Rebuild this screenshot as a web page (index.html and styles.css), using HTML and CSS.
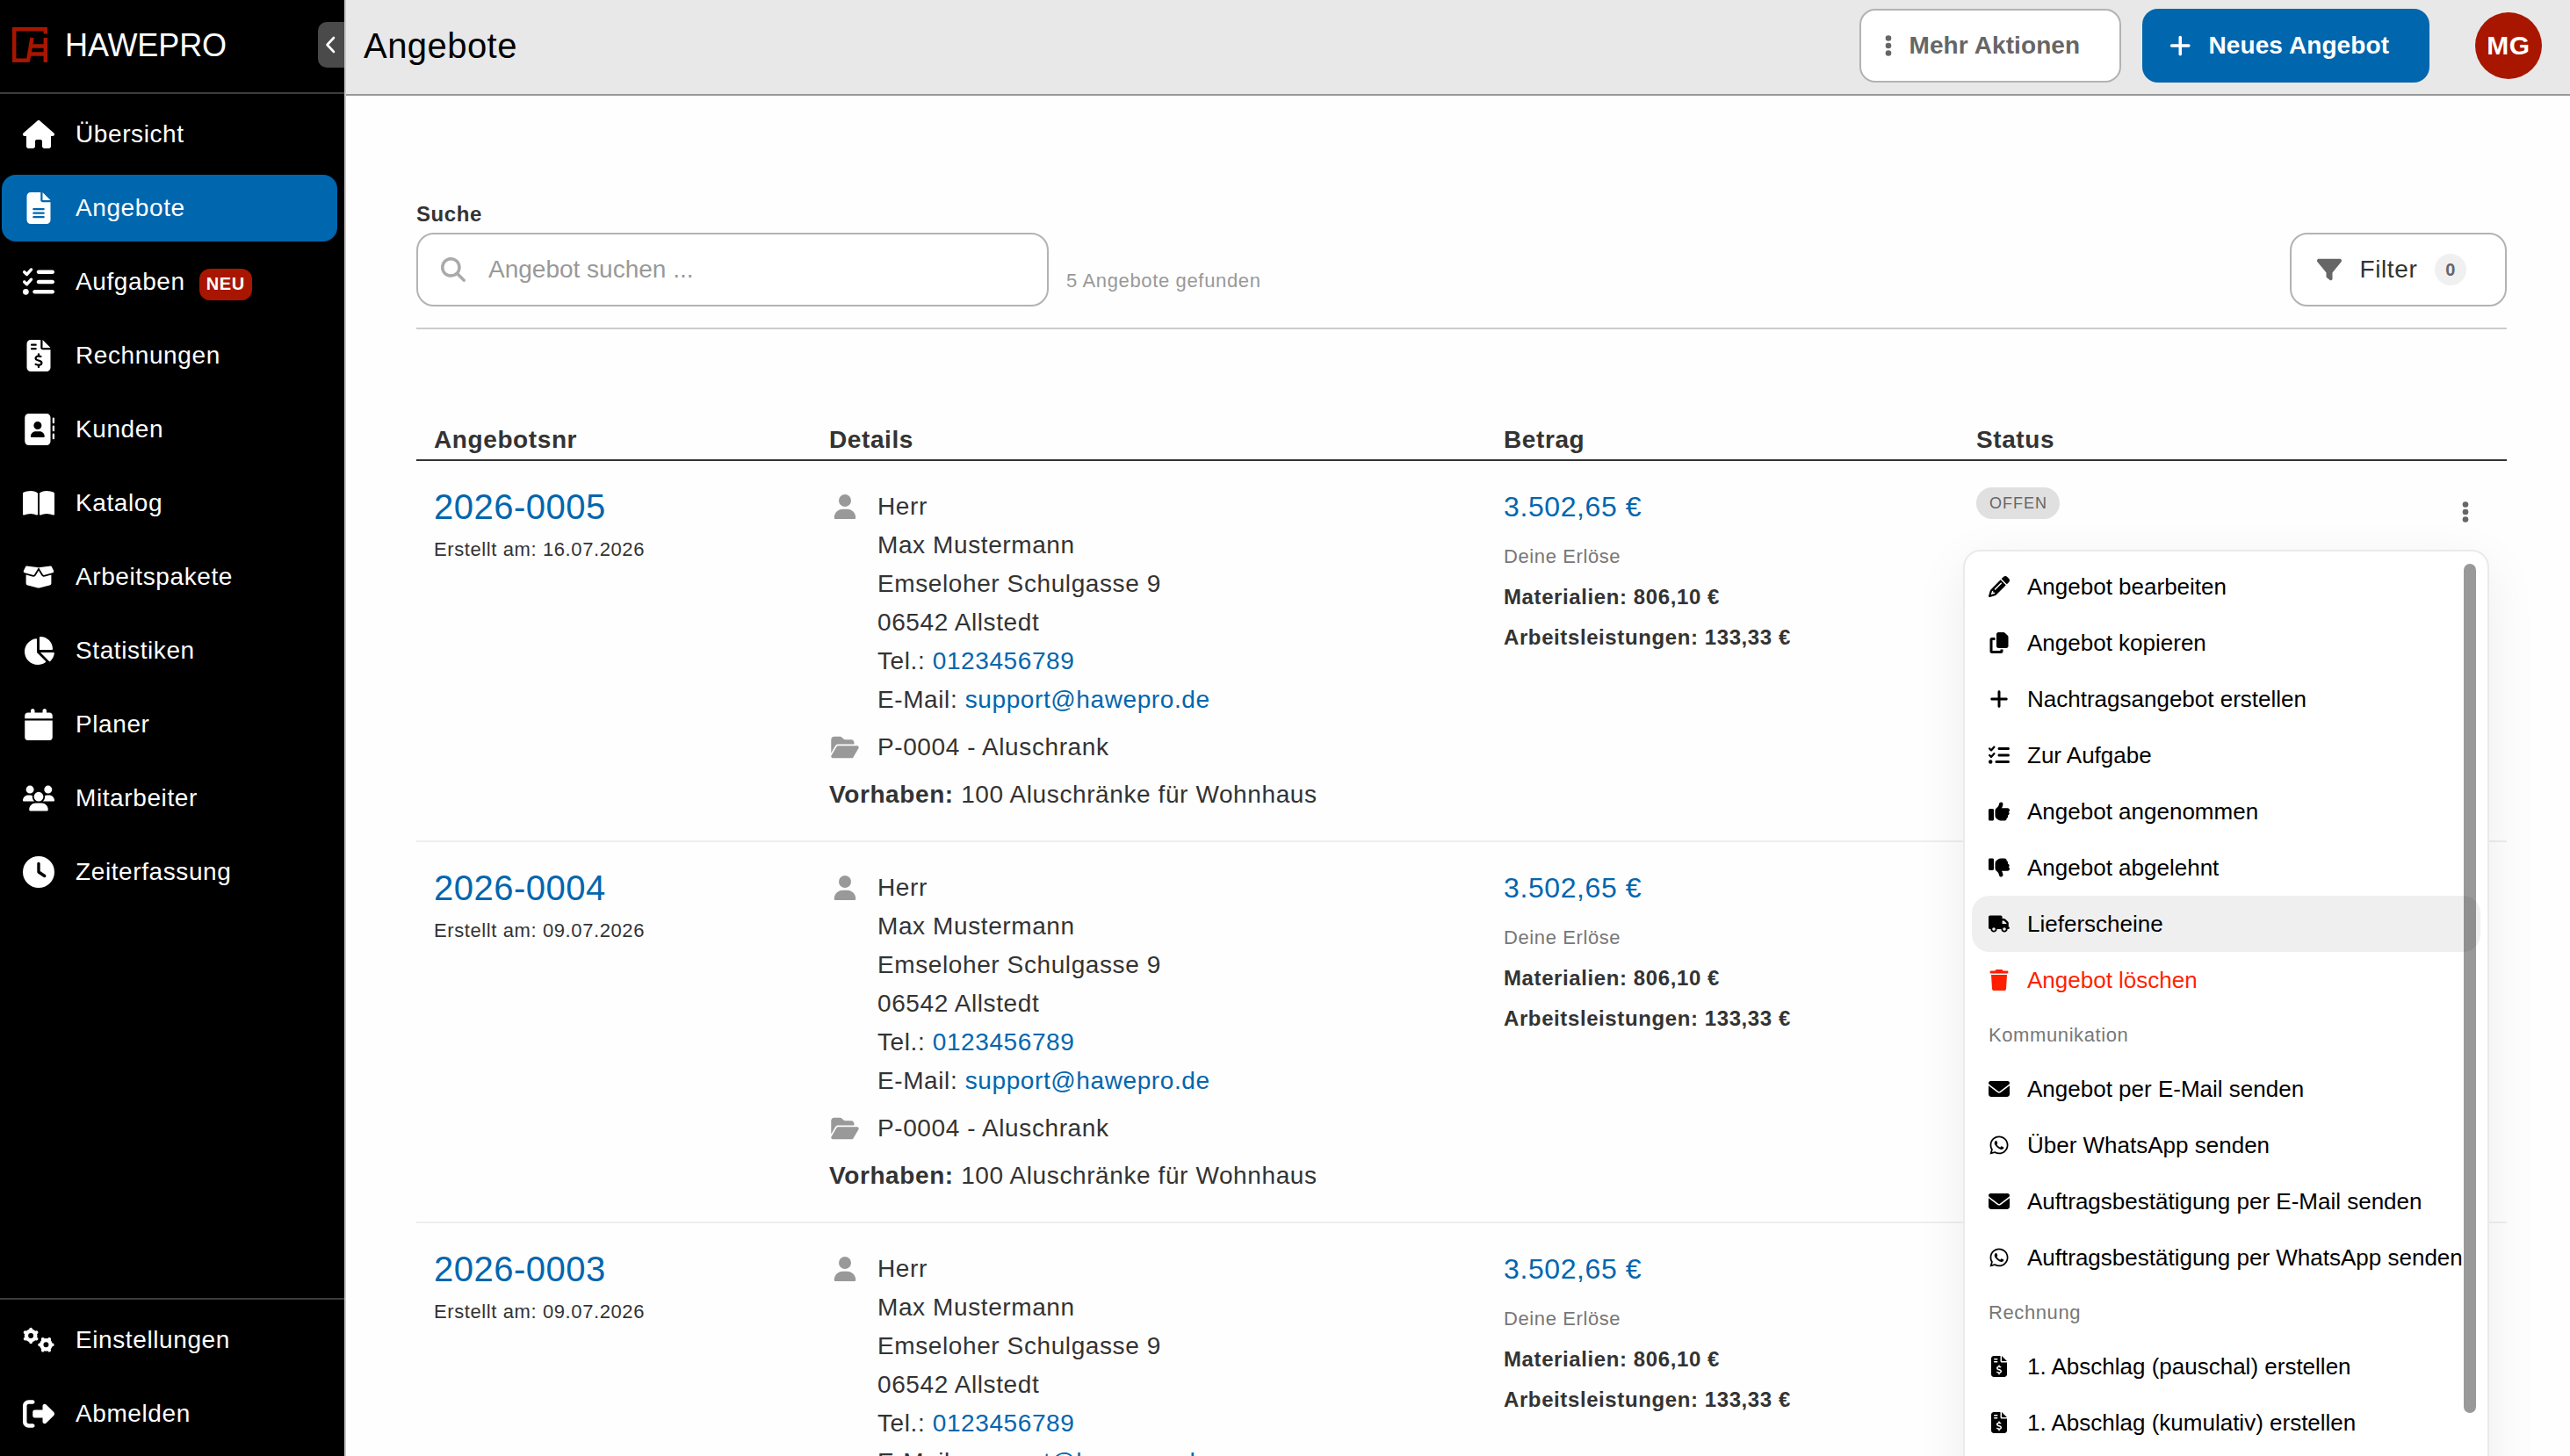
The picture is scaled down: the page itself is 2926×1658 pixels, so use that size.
FILE: index.html
```html
<!DOCTYPE html>
<html lang="de">
<head>
<meta charset="utf-8">
<title>Angebote</title>
<link rel="stylesheet" href="styles.css">
</head>
<body>
<svg class="sprite" aria-hidden="true">
  <symbol id="house" viewBox="0 0 576 512"><path d="M575.8 255.5c0 18-15 32.1-32 32.1h-32l.7 160.2c0 2.7-.2 5.4-.5 8.1V472c0 22.1-17.9 40-40 40H456c-1.1 0-2.2 0-3.3-.1c-1.4 .1-2.8 .1-4.2 .1H416 392c-22.1 0-40-17.9-40-40V448 384c0-17.7-14.3-32-32-32H256c-17.7 0-32 14.3-32 32v64 24c0 22.1-17.9 40-40 40H160 128.1c-1.5 0-3-.1-4.5-.2c-1.2 .1-2.4 .2-3.6 .2H104c-22.1 0-40-17.9-40-40V360c0-.9 0-1.9 .1-2.8V287.6H32c-18 0-32-14-32-32.1c0-9 3-17 10-24L266.4 8c7-7 15-8 22-8s15 2 21 7L564.8 231.5c8 7 12 15 11 24z"/></symbol>
  <symbol id="file-lines" viewBox="0 0 384 512"><path fill-rule="evenodd" d="M64 0C28.7 0 0 28.7 0 64V448c0 35.3 28.7 64 64 64H320c35.3 0 64-28.7 64-64V160H256c-17.7 0-32-14.3-32-32V0H64zM256 0V128H384L256 0zM112 256H272c8.8 0 16 7.2 16 16s-7.2 16-16 16H112c-8.8 0-16-7.2-16-16s7.2-16 16-16zm0 64H272c8.8 0 16 7.2 16 16s-7.2 16-16 16H112c-8.8 0-16-7.2-16-16s7.2-16 16-16zm0 64H272c8.8 0 16 7.2 16 16s-7.2 16-16 16H112c-8.8 0-16-7.2-16-16s7.2-16 16-16z"/></symbol>
  <symbol id="list-check" viewBox="0 0 512 512"><path d="M152.1 38.2c9.9 8.9 10.7 24 1.8 33.9l-72 80c-4.4 4.9-10.6 7.8-17.2 7.9s-12.9-2.4-17.6-7L7 113C-2.3 103.6-2.3 88.4 7 79s24.6-9.4 33.9 0l22.1 22.1 55.1-61.2c8.9-9.9 24-10.7 33.9-1.8zm0 160c9.9 8.9 10.7 24 1.8 33.9l-72 80c-4.4 4.9-10.6 7.8-17.2 7.9s-12.9-2.4-17.6-7L7 273c-9.4-9.4-9.4-24.6 0-33.9s24.6-9.4 33.9 0l22.1 22.1 55.1-61.2c8.9-9.9 24-10.7 33.9-1.8zM224 96c0-17.7 14.3-32 32-32H480c17.7 0 32 14.3 32 32s-14.3 32-32 32H256c-17.7 0-32-14.3-32-32zm0 160c0-17.7 14.3-32 32-32H480c17.7 0 32 14.3 32 32s-14.3 32-32 32H256c-17.7 0-32-14.3-32-32zM160 416c0-17.7 14.3-32 32-32H480c17.7 0 32 14.3 32 32s-14.3 32-32 32H192c-17.7 0-32-14.3-32-32zM48 368a48 48 0 1 1 0 96 48 48 0 1 1 0-96z"/></symbol>
  <symbol id="invoice" viewBox="0 0 384 512"><path fill-rule="evenodd" d="M64 0C28.7 0 0 28.7 0 64V448c0 35.3 28.7 64 64 64H320c35.3 0 64-28.7 64-64V160H256c-17.7 0-32-14.3-32-32V0H64zM256 0V128H384L256 0zM64 80c0-8.8 7.2-16 16-16h64c8.8 0 16 7.2 16 16s-7.2 16-16 16H80c-8.8 0-16-7.2-16-16zm0 64c0-8.8 7.2-16 16-16h64c8.8 0 16 7.2 16 16s-7.2 16-16 16H80c-8.8 0-16-7.2-16-16zm128 72c8.8 0 16 7.2 16 16v17.3c8.5 1.2 16.7 3.1 24.1 5.1c8.5 2.3 13.6 11 11.3 19.6s-11 13.6-19.6 11.3c-11.1-3-22-5.2-32.1-5.3c-8.4-.1-17.4 1.8-23.6 5.5c-5.7 3.4-8.1 7.3-8.1 12.8c0 3.7 1.3 6.5 7.3 10.1c6.9 4.1 16.6 7.1 29.2 10.9l.5 .1c11.3 3.4 25.3 7.6 36.3 14.6c12.1 7.6 22.4 19.7 22.7 38.2c.3 19.3-9.6 33.3-22.9 41.6c-7.7 4.8-16.4 7.6-25.1 9.1V440c0 8.8-7.2 16-16 16s-16-7.2-16-16V422.2c-11.2-2.1-21.7-5.7-30.9-8.9c-2.1-.7-4.2-1.4-6.2-2.1c-8.4-2.8-12.9-11.9-10.1-20.2s11.9-12.9 20.2-10.1c2.5 .8 4.8 1.6 7.1 2.4c13.6 4.6 24.6 8.4 36.3 8.7c9.1 .3 17.9-1.7 23.7-5.3c5.1-3.2 7.9-7.3 7.8-14c-.1-4.6-1.8-7.8-7.7-11.6c-6.8-4.3-16.5-7.4-29-11.2l-1.6-.5c-11-3.3-24.3-7.3-34.8-13.7c-12-7.2-22.6-18.9-22.7-37.3c-.1-19.4 10.8-32.8 23.8-40.5c7.5-4.4 15.8-7.2 24.1-8.7V232c0-8.8 7.2-16 16-16z"/></symbol>
  <symbol id="address-book" viewBox="0 0 512 512"><path fill-rule="evenodd" d="M96 0C60.7 0 32 28.7 32 64V448c0 35.3 28.7 64 64 64H384c35.3 0 64-28.7 64-64V64c0-35.3-28.7-64-64-64H96zM208 288h64c44.2 0 80 35.8 80 80c0 8.8-7.2 16-16 16H144c-8.8 0-16-7.2-16-16c0-44.2 35.8-80 80-80zm-32-96a64 64 0 1 1 128 0 64 64 0 1 1 -128 0zM512 80c0-8.8-7.2-16-16-16s-16 7.2-16 16v64c0 8.8 7.2 16 16 16s16-7.2 16-16V80zM496 192c-8.8 0-16 7.2-16 16v64c0 8.8 7.2 16 16 16s16-7.2 16-16V208c0-8.8-7.2-16-16-16zm16 144c0-8.8-7.2-16-16-16s-16 7.2-16 16v64c0 8.8 7.2 16 16 16s16-7.2 16-16V336z"/></symbol>
  <symbol id="book-open" viewBox="0 0 576 512"><path d="M249.6 471.5c10.8 3.8 22.4-4.1 22.4-15.5V78.6c0-4.2-1.6-8.4-5-11C247.4 52 202.4 32 144 32C93.5 32 46.3 45.3 18.1 56.1C6.8 60.5 0 71.7 0 83.8V454.1c0 11.9 12.8 20.2 24.1 16.5C55.6 460.1 105.5 448 144 448c33.9 0 79 14 105.6 23.5zm76.8 0C353 462 398.1 448 432 448c38.5 0 88.4 12.1 119.9 22.6c11.3 3.8 24.1-4.6 24.1-16.5V83.8c0-12.1-6.8-23.3-18.1-27.6C529.7 45.3 482.5 32 432 32c-58.4 0-103.4 20-123 35.6c-3.3 2.6-5 6.8-5 11V456c0 11.4 11.7 19.3 22.4 15.5z"/></symbol>
  <symbol id="box-open" viewBox="0 0 640 512"><path d="M58.9 42.1c3-6.1 9.6-9.6 16.3-8.7L320 64 564.8 33.4c6.7-.8 13.3 2.7 16.3 8.7l41.7 83.4c9 17.9-.6 39.6-19.8 45.1L439.6 217.3c-13.9 4-28.8-1.9-36.2-14.3L320 64 236.6 203c-7.4 12.4-22.3 18.3-36.2 14.3L37.1 170.6c-19.3-5.5-28.8-27.2-19.8-45.1L58.9 42.1zM321.1 128l54.9 91.4c14.9 24.8 44.6 36.6 72.5 28.6L576 211.6v167c0 22-15 41.2-36.4 46.6l-204.1 51c-10.2 2.6-20.9 2.6-31 0l-204.1-51C79 419.7 64 400.5 64 378.5v-167L191.6 248c27.8 8 57.6-3.8 72.5-28.6L318.9 128h2.2z"/></symbol>
  <symbol id="chart-pie" viewBox="0 0 576 512"><path d="M304 240V16.6c0-9 7-16.6 16-16.6C443.7 0 544 100.3 544 224c0 9-7.6 16-16.6 16H304zM32 272C32 150.7 122.1 50.3 239 34.3c9.2-1.3 17 6.1 17 15.4V288L412.5 444.5c6.7 6.7 6.2 17.7-1.5 23.1C371.8 495.6 323.8 512 272 512C139.5 512 32 404.6 32 272zm526.4 16c9.3 0 16.6 7.8 15.4 17c-7.7 55.9-34.6 105.6-73.9 142.3c-6 5.6-15.4 5.2-21.2-.7L320 288H558.4z"/></symbol>
  <symbol id="calendar" viewBox="0 0 448 512"><path d="M96 32V64H48C21.5 64 0 85.5 0 112v48H448V112c0-26.5-21.5-48-48-48H352V32c0-17.7-14.3-32-32-32s-32 14.3-32 32V64H160V32c0-17.7-14.3-32-32-32S96 14.3 96 32zM448 192H0V464c0 26.5 21.5 48 48 48H400c26.5 0 48-21.5 48-48V192z"/></symbol>
  <symbol id="users" viewBox="0 0 640 512"><path d="M144 0a80 80 0 1 1 0 160A80 80 0 1 1 144 0zM512 0a80 80 0 1 1 0 160A80 80 0 1 1 512 0zM0 298.7C0 239.8 47.8 192 106.7 192h42.7c15.9 0 31 3.5 44.6 9.7c-1.3 7.2-1.9 14.7-1.9 22.3c0 38.2 16.8 72.5 43.3 96c-.2 0-.4 0-.7 0H21.3C9.6 320 0 310.4 0 298.7zM405.3 320c-.2 0-.4 0-.7 0c26.6-23.5 43.3-57.8 43.3-96c0-7.6-.7-15-1.9-22.3c13.6-6.3 28.7-9.7 44.6-9.7h42.7C592.2 192 640 239.8 640 298.7c0 11.8-9.6 21.3-21.3 21.3H405.3zM224 224a96 96 0 1 1 192 0 96 96 0 1 1 -192 0zM128 485.3C128 411.7 187.7 352 261.3 352H378.7C452.3 352 512 411.7 512 485.3c0 14.7-11.9 26.7-26.7 26.7H154.7c-14.7 0-26.7-11.9-26.7-26.7z"/></symbol>
  <symbol id="clock" viewBox="0 0 512 512"><path fill-rule="evenodd" d="M256 0a256 256 0 1 1 0 512A256 256 0 1 1 256 0zM232 120V256c0 8 4 15.5 10.7 20l96 64c11 7.4 25.9 4.4 33.3-6.7s4.4-25.9-6.7-33.3L280 243.2V120c0-13.3-10.7-24-24-24s-24 10.7-24 24z"/></symbol>
  <symbol id="gears" viewBox="0 0 640 512">
    <g fill="none" stroke="currentColor" stroke-linecap="round">
      <circle cx="162" cy="166" r="92" stroke-width="78"/>
      <path stroke-width="68" d="M162 66V36M162 266V296M75 116L49 101M249 116L275 101M75 216L49 231M249 216L275 231"/>
      <circle cx="470" cy="350" r="92" stroke-width="78"/>
      <path stroke-width="68" d="M370 350H340M570 350H600M420 263L405 237M520 263L535 237M420 437L405 463M520 437L535 463"/>
    </g>
  </symbol>
  <symbol id="logout" viewBox="0 0 512 512"><path d="M377.9 105.9L500.7 228.7c7.2 7.2 11.3 17.1 11.3 27.3s-4.1 20.1-11.3 27.3L377.9 406.1c-6.4 6.4-15 9.9-24 9.9c-18.7 0-33.9-15.2-33.9-33.9l0-62.1-128 0c-17.7 0-32-14.3-32-32l0-64c0-17.7 14.3-32 32-32l128 0 0-62.1c0-18.7 15.2-33.9 33.9-33.9c9 0 17.6 3.6 24 9.9zM160 96L96 96c-17.7 0-32 14.3-32 32l0 256c0 17.7 14.3 32 32 32l64 0c17.7 0 32 14.3 32 32s-14.3 32-32 32l-64 0c-53 0-96-43-96-96L0 128C0 75 43 32 96 32l64 0c17.7 0 32 14.3 32 32s-14.3 32-32 32z"/></symbol>
  <symbol id="search" viewBox="0 0 512 512"><path d="M416 208c0 45.9-14.9 88.3-40 122.7L502.6 457.4c12.5 12.5 12.5 32.8 0 45.3s-32.8 12.5-45.3 0L330.7 376c-34.4 25.2-76.8 40-122.7 40C93.1 416 0 322.9 0 208S93.1 0 208 0S416 93.1 416 208zM208 352a144 144 0 1 0 0-288 144 144 0 1 0 0 288z"/></symbol>
  <symbol id="filter" viewBox="0 0 512 512"><path d="M3.9 54.9C10.5 40.9 24.5 32 40 32H472c15.5 0 29.5 8.9 36.1 22.9s4.6 30.5-5.2 42.5L320 320.9V448c0 12.1-6.8 23.2-17.7 28.6s-23.8 4.3-33.5-3l-64-48c-8.1-6-12.8-15.5-12.8-25.6V320.9L9 97.3C-.7 85.4-2.8 68.8 3.9 54.9z"/></symbol>
  <symbol id="user" viewBox="0 0 448 512"><path d="M224 256A128 128 0 1 0 224 0a128 128 0 1 0 0 256zm-45.7 48C79.8 304 0 383.8 0 482.3C0 498.7 13.3 512 29.7 512H418.3c16.4 0 29.7-13.3 29.7-29.7C448 383.8 368.2 304 269.7 304H178.3z"/></symbol>
  <symbol id="folder" viewBox="0 0 576 512"><path d="M88.7 223.8L0 375.8V96C0 60.7 28.7 32 64 32H181.5c17 0 33.3 6.7 45.3 18.7l26.5 26.5c12 12 28.3 18.7 45.3 18.7H416c35.3 0 64 28.7 64 64v32H144c-22.8 0-43.8 12.1-55.3 31.8zm27.6 16.1C122.1 230 132.6 224 144 224H544c11.5 0 22 6.1 27.7 16.1s5.7 22.2-.1 32.1l-112 192C453.9 474 443.4 480 432 480H32c-11.5 0-22-6.1-27.7-16.1s-5.7-22.2 .1-32.1l112-192z"/></symbol>
  <symbol id="pencil" viewBox="0 0 512 512"><path fill-rule="evenodd" d="M410.3 231l11.3-11.3-33.9-33.9-62.1-62.1L291.7 89.8l-11.3 11.3-22.6 22.6L58.6 322.9c-10.4 10.4-18 23.3-22.2 37.4L1 480.7c-2.5 8.4-.2 17.5 6.1 23.7s15.3 8.5 23.7 6.1l120.3-35.4c14.1-4.2 27-11.8 37.4-22.2L387.7 253.7 410.3 231zM160 399.4l-9.1 22.7c-4 3.1-8.5 5.4-13.3 6.9L59.4 452l23-78.1c1.4-4.9 3.8-9.4 6.9-13.3l22.7-9.1v32c0 8.8 7.2 16 16 16h32zM362.7 18.7L348.3 33.2 325.7 55.8 314.3 67.1l33.9 33.9 62.1 62.1 33.9 33.9 11.3-11.3 22.6-22.6 14.5-14.5c25-25 25-65.5 0-90.5L453.3 18.7c-25-25-65.5-25-90.5 0zm-47.4 168l-144 144c-6.2 6.2-16.4 6.2-22.6 0s-6.2-16.4 0-22.6l144-144c6.2-6.2 16.4-6.2 22.6 0s6.2 16.4 0 22.6z"/></symbol>
  <symbol id="copy" viewBox="0 0 448 512"><path d="M208 0H332.1c12.7 0 24.9 5.1 33.9 14.1l67.9 67.9c9 9 14.1 21.2 14.1 33.9V336c0 26.5-21.5 48-48 48H208c-26.5 0-48-21.5-48-48V48c0-26.5 21.5-48 48-48zM48 128h80v64H64V448H256V416h64v48c0 26.5-21.5 48-48 48H48c-26.5 0-48-21.5-48-48V176c0-26.5 21.5-48 48-48z"/></symbol>
  <symbol id="plus" viewBox="0 0 448 512"><path d="M256 80c0-17.7-14.3-32-32-32s-32 14.3-32 32V224H48c-17.7 0-32 14.3-32 32s14.3 32 32 32H192V432c0 17.7 14.3 32 32 32s32-14.3 32-32V288H400c17.7 0 32-14.3 32-32s-14.3-32-32-32H256V80z"/></symbol>
  <symbol id="thumb" viewBox="0 0 512 512"><path d="M313.4 32.9c26 5.2 42.9 30.5 37.7 56.5l-2.3 11.4c-5.3 26.7-15.1 52.1-28.8 75.2H464c26.5 0 48 21.5 48 48c0 18.5-10.5 34.6-25.9 42.6C497 275.4 504 288.9 504 304c0 23.4-16.8 42.9-38.9 47.1c4.4 7.3 6.9 15.8 6.9 24.9c0 21.3-13.9 39.4-33.1 45.6c.7 3.3 1.1 6.8 1.1 10.4c0 26.5-21.5 48-48 48H294.5c-19 0-37.5-5.6-53.3-16.1l-38.5-25.7C176 420.4 160 390.4 160 358.3V320 272 247.1c0-29.2 13.3-56.7 36-75l7.4-5.9c26.5-21.2 44.6-51 51.2-84.2l2.3-11.4c5.2-26 30.5-42.9 56.5-37.7zM32 192H96c17.7 0 32 14.3 32 32V448c0 17.7-14.3 32-32 32H32c-17.7 0-32-14.3-32-32V224c0-17.7 14.3-32 32-32z"/></symbol>
  <symbol id="truck" viewBox="0 0 640 512"><path fill-rule="evenodd" d="M48 0C21.5 0 0 21.5 0 48V368c0 26.5 21.5 48 48 48H64c0 53 43 96 96 96s96-43 96-96H384c0 53 43 96 96 96s96-43 96-96h32c17.7 0 32-14.3 32-32s-14.3-32-32-32V288 256 237.3c0-17-6.7-33.3-18.7-45.3L512 114.7c-12-12-28.3-18.7-45.3-18.7H416V48c0-26.5-21.5-48-48-48H48zM416 160h50.7L544 237.3V256H416V160zM112 416a48 48 0 1 1 96 0 48 48 0 1 1 -96 0zm368-48a48 48 0 1 1 0 96 48 48 0 1 1 0-96z"/></symbol>
  <symbol id="trash" viewBox="0 0 448 512"><path d="M135.2 17.7L128 32H32C14.3 32 0 46.3 0 64S14.3 96 32 96H416c17.7 0 32-14.3 32-32s-14.3-32-32-32H320l-7.2-14.3C307.4 6.8 296.3 0 284.2 0H163.8c-12.1 0-23.2 6.8-28.6 17.7zM416 128H32L53.2 467c1.6 25.3 22.6 45 47.9 45H346.9c25.3 0 46.3-19.7 47.9-45L416 128z"/></symbol>
  <symbol id="envelope" viewBox="0 0 512 512"><path d="M48 64C21.5 64 0 85.5 0 112c0 15.1 7.1 29.3 19.2 38.4L236.8 313.6c11.4 8.5 27 8.5 38.4 0L492.8 150.4c12.1-9.1 19.2-23.3 19.2-38.4c0-26.5-21.5-48-48-48H48zM0 176V384c0 35.3 28.7 64 64 64H448c35.3 0 64-28.7 64-64V176L294.4 339.2c-22.8 17.1-54 17.1-76.8 0L0 176z"/></symbol>
  <symbol id="whatsapp" viewBox="0 0 448 512"><path d="M380.9 97.1C339 55.1 283.2 32 223.9 32c-122.4 0-222 99.6-222 222 0 39.1 10.2 77.3 29.6 111L0 480l117.7-30.9c32.4 17.7 68.9 27 106.1 27h.1c122.3 0 224.1-99.6 224.1-222 0-59.3-25.2-115-67.1-157zm-157 341.6c-33.2 0-65.7-8.9-94-25.7l-6.7-4-69.8 18.3L72 359.2l-4.4-7c-18.5-29.4-28.2-63.3-28.2-98.2 0-101.7 82.8-184.5 184.6-184.5 49.3 0 95.6 19.2 130.4 54.1 34.8 34.9 56.2 81.2 56.1 130.5 0 101.8-84.9 184.6-186.6 184.6zm101.2-138.2c-5.5-2.8-32.8-16.2-37.9-18-5.1-1.9-8.8-2.8-12.5 2.8-3.7 5.6-14.3 18-17.6 21.8-3.2 3.7-6.5 4.2-12 1.4-32.6-16.3-54-29.1-75.5-66-5.7-9.8 5.7-9.1 16.3-30.3 1.8-3.7.9-6.9-.5-9.7-1.4-2.8-12.5-30.1-17.1-41.2-4.5-10.8-9.1-9.3-12.5-9.5-3.2-.2-6.9-.2-10.6-.2-3.7 0-9.7 1.4-14.8 6.9-5.1 5.6-19.4 19-19.4 46.3 0 27.3 19.9 53.7 22.6 57.4 2.8 3.7 39.1 59.7 94.8 83.8 35.2 15.2 49 16.5 66.6 13.9 10.7-1.6 32.8-13.4 37.4-26.4 4.6-13 4.6-24.1 3.2-26.4-1.3-2.5-5-3.9-10.5-6.6z"/></symbol>
  <symbol id="dots" viewBox="0 0 8 24"><circle cx="4" cy="3.5" r="3.3"/><circle cx="4" cy="12" r="3.3"/><circle cx="4" cy="20.5" r="3.3"/></symbol>
</svg>

<div class="app">
  <aside class="sidebar">
    <header class="brand">
      <svg class="brand-logo" viewBox="0 0 40 40" fill="none" stroke="#a81600" stroke-width="4.4"><path d="M37.8 7.5V2.2H2.2v35.6h15.5"/><path d="M17.8 39.5L22.5 12M37.8 12v28M22 21.5h15M20.5 30.5h16"/></svg>
      <span class="brand-name">HAWEPRO</span>
      <button class="collapse" aria-label="Menü einklappen"><svg viewBox="0 0 12 20" fill="none" stroke="#fff" stroke-width="2.6" stroke-linecap="round" stroke-linejoin="round"><path d="M10 2L2.5 10L10 18"/></svg></button>
    </header>
    <nav class="nav">
      <a class="nav-item"><svg><use href="#house"/></svg>Übersicht</a>
      <a class="nav-item active"><svg><use href="#file-lines"/></svg>Angebote</a>
      <a class="nav-item"><svg><use href="#list-check"/></svg>Aufgaben<span class="new-badge">NEU</span></a>
      <a class="nav-item"><svg><use href="#invoice"/></svg>Rechnungen</a>
      <a class="nav-item"><svg><use href="#address-book"/></svg>Kunden</a>
      <a class="nav-item"><svg><use href="#book-open"/></svg>Katalog</a>
      <a class="nav-item"><svg><use href="#box-open"/></svg>Arbeitspakete</a>
      <a class="nav-item"><svg><use href="#chart-pie"/></svg>Statistiken</a>
      <a class="nav-item"><svg><use href="#calendar"/></svg>Planer</a>
      <a class="nav-item"><svg><use href="#users"/></svg>Mitarbeiter</a>
      <a class="nav-item"><svg><use href="#clock"/></svg>Zeiterfassung</a>
    </nav>
    <nav class="nav nav-bottom">
      <a class="nav-item"><svg><use href="#gears"/></svg>Einstellungen</a>
      <a class="nav-item"><svg><use href="#logout"/></svg>Abmelden</a>
    </nav>
  </aside>

  <main class="main">
    <header class="topbar">
      <h1 class="title">Angebote</h1>
      <button class="btn btn-more"><svg class="dots"><use href="#dots"/></svg>Mehr Aktionen</button>
      <button class="btn btn-primary"><svg><use href="#plus"/></svg>Neues Angebot</button>
      <div class="avatar">MG</div>
    </header>

    <div class="content">
      <section class="search">
        <div class="search-field">
          <label class="search-label">Suche</label>
          <div class="search-box"><svg><use href="#search"/></svg>Angebot suchen ...</div>
        </div>
        <span class="count">5 Angebote gefunden</span>
        <button class="filter"><svg><use href="#filter"/></svg>Filter<span class="filter-count">0</span></button>
      </section>

      <section class="table">
        <div class="row head"><div>Angebotsnr</div><div>Details</div><div>Betrag</div><div>Status</div></div>

        <article class="row">
          <div><a class="number">2026-0005</a><p class="created">Erstellt am: 16.07.2026</p></div>
          <div class="details">
            <div class="with-icon"><svg><use href="#user"/></svg><p>Herr<br>Max Mustermann<br>Emseloher Schulgasse 9<br>06542 Allstedt<br>Tel.: <a>0123456789</a><br>E-Mail: <a>support@hawepro.de</a></p></div>
            <div class="with-icon"><svg><use href="#folder"/></svg><p>P-0004 - Aluschrank</p></div>
            <p><b>Vorhaben:</b> 100 Aluschränke für Wohnhaus</p>
          </div>
          <div class="amount"><a class="sum">3.502,65 €</a><p class="muted">Deine Erlöse</p><p class="part">Materialien: 806,10 €</p><p class="part">Arbeitsleistungen: 133,33 €</p></div>
          <div class="status">
            <span class="pill">OFFEN</span>
            <svg class="dots"><use href="#dots"/></svg>
            <div class="menu">
              <a class="menu-item"><svg><use href="#pencil"/></svg>Angebot bearbeiten</a>
              <a class="menu-item"><svg><use href="#copy"/></svg>Angebot kopieren</a>
              <a class="menu-item"><svg><use href="#plus"/></svg>Nachtragsangebot erstellen</a>
              <a class="menu-item"><svg><use href="#list-check"/></svg>Zur Aufgabe</a>
              <a class="menu-item"><svg><use href="#thumb"/></svg>Angebot angenommen</a>
              <a class="menu-item"><svg class="flip"><use href="#thumb"/></svg>Angebot abgelehnt</a>
              <a class="menu-item hover"><svg><use href="#truck"/></svg>Lieferscheine</a>
              <a class="menu-item danger"><svg><use href="#trash"/></svg>Angebot löschen</a>
              <div class="menu-label">Kommunikation</div>
              <a class="menu-item"><svg><use href="#envelope"/></svg>Angebot per E-Mail senden</a>
              <a class="menu-item"><svg><use href="#whatsapp"/></svg>Über WhatsApp senden</a>
              <a class="menu-item"><svg><use href="#envelope"/></svg>Auftragsbestätigung per E-Mail senden</a>
              <a class="menu-item"><svg><use href="#whatsapp"/></svg>Auftragsbestätigung per WhatsApp senden</a>
              <div class="menu-label">Rechnung</div>
              <a class="menu-item"><svg><use href="#invoice"/></svg>1. Abschlag (pauschal) erstellen</a>
              <a class="menu-item"><svg><use href="#invoice"/></svg>1. Abschlag (kumulativ) erstellen</a>
              <div class="scrollbar"></div>
            </div>
          </div>
        </article>

        <article class="row">
          <div><a class="number">2026-0004</a><p class="created">Erstellt am: 09.07.2026</p></div>
          <div class="details">
            <div class="with-icon"><svg><use href="#user"/></svg><p>Herr<br>Max Mustermann<br>Emseloher Schulgasse 9<br>06542 Allstedt<br>Tel.: <a>0123456789</a><br>E-Mail: <a>support@hawepro.de</a></p></div>
            <div class="with-icon"><svg><use href="#folder"/></svg><p>P-0004 - Aluschrank</p></div>
            <p><b>Vorhaben:</b> 100 Aluschränke für Wohnhaus</p>
          </div>
          <div class="amount"><a class="sum">3.502,65 €</a><p class="muted">Deine Erlöse</p><p class="part">Materialien: 806,10 €</p><p class="part">Arbeitsleistungen: 133,33 €</p></div>
        </article>

        <article class="row">
          <div><a class="number">2026-0003</a><p class="created">Erstellt am: 09.07.2026</p></div>
          <div class="details">
            <div class="with-icon"><svg><use href="#user"/></svg><p>Herr<br>Max Mustermann<br>Emseloher Schulgasse 9<br>06542 Allstedt<br>Tel.: <a>0123456789</a><br>E-Mail: <a>support@hawepro.de</a></p></div>
          </div>
          <div class="amount"><a class="sum">3.502,65 €</a><p class="muted">Deine Erlöse</p><p class="part">Materialien: 806,10 €</p><p class="part">Arbeitsleistungen: 133,33 €</p></div>
        </article>
      </section>
    </div>
  </main>
</div>
</body>
</html>
```

FILE: styles.css
```css
* { box-sizing: border-box; margin: 0; padding: 0; }

html, body { height: 100%; overflow: hidden; }

body {
  background: #fefefe;
  color: #333;
  font-family: "Liberation Sans", Arial, sans-serif;
  font-size: 28px;
  line-height: 44px;
  letter-spacing: 0.6px;
}

svg { fill: currentColor; flex: none; display: block; }
button { font: inherit; color: inherit; border: 0; background: none; }
a { color: #0066ae; }

.sprite { display: none; }

.app { display: flex; height: 100vh; overflow: hidden; }

/* Sidebar */
.sidebar {
  flex: none;
  width: 394px;
  display: flex;
  flex-direction: column;
  background: #000;
  color: #fff;
  border-right: 2px solid #c8c8c8;
}
.brand {
  display: flex;
  align-items: center;
  height: 107px;
  padding: 0 0 3px 14px;
  border-bottom: 2px solid #3c3c3c;
}
.brand-logo { width: 40px; height: 40px; fill: none; }
.brand-name { margin: 1px 0 0 20px; font-size: 36px; letter-spacing: -0.1px; }
.collapse {
  display: flex;
  align-items: center;
  justify-content: center;
  width: 30px;
  height: 52px;
  margin-left: auto;
  padding-right: 2px;
  border-radius: 10px 0 0 10px;
  background: #4a4a4a;
}
.collapse svg { width: 12px; height: 20px; fill: none; }

.nav { display: flex; flex-direction: column; gap: 8px; padding: 8px 8px 10px 2px; }
.nav-item {
  display: flex;
  align-items: center;
  gap: 24px;
  height: 76px;
  padding-left: 24px;
  border-radius: 16px;
  color: #fff;
}
.nav-item svg { width: 36px; height: 36px; }
.nav-item.active { background: #0066ae; }
.nav-bottom { margin-top: auto; border-top: 2px solid #3c3c3c; }
.new-badge {
  height: 36px;
  margin: 5px 0 0 -8px;
  padding: 0 8px;
  border-radius: 12px;
  background: #a81600;
  font-size: 20px;
  font-weight: bold;
  line-height: 35px;
}

/* Top bar */
.main { flex: 1; min-width: 0; display: flex; flex-direction: column; }
.topbar {
  flex: none;
  display: flex;
  align-items: center;
  height: 109px;
  padding: 0 32px 3px 20px;
  background: #e8e8e8;
  border-bottom: 2px solid #999;
}
.title { margin-right: auto; color: #000; font-size: 40px; font-weight: normal; letter-spacing: 0.45px; }
.btn {
  display: flex;
  align-items: center;
  height: 84px;
  border-radius: 18px;
  font-weight: bold;
  letter-spacing: 0.1px;
}
.btn-more {
  width: 298px;
  gap: 19.5px;
  padding-left: 27px;
  border: 2px solid #b3b3b3;
  background: #fff;
  color: #666;
}
.dots { width: 8px; height: 24px; color: #666; }
.btn-primary {
  width: 327px;
  gap: 20px;
  margin: 0 52px 0 24px;
  padding-left: 31px;
  background: #0066ae;
  color: #fff;
}
.btn-primary svg { width: 24.5px; height: 28px; }
.avatar {
  width: 76px;
  height: 76px;
  border-radius: 50%;
  background: #a81600;
  color: #fff;
  font-size: 30px;
  font-weight: bold;
  line-height: 76px;
  text-align: center;
}

/* Search */
.content { padding: 119px 72px 0 80px; }
.search {
  display: flex;
  align-items: flex-end;
  padding-bottom: 24px;
  border-bottom: 2px solid #ccc;
}
.search-label { display: block; margin-bottom: 5px; font-size: 24px; font-weight: bold; line-height: 32px; }
.search-box {
  display: flex;
  align-items: center;
  gap: 26px;
  width: 720px;
  height: 84px;
  padding-left: 26px;
  border: 2px solid #b3b3b3;
  border-radius: 20px;
  background: #fff;
  color: #999;
  letter-spacing: 0;
}
.search-box svg { width: 28px; height: 28px; color: #aaa; }
.count { margin: 0 auto 14px 20px; color: #999; font-size: 22px; line-height: 30px; letter-spacing: 0.65px; }
.filter {
  display: flex;
  align-items: center;
  width: 247px;
  height: 84px;
  padding-left: 29px;
  border: 2px solid #b3b3b3;
  border-radius: 20px;
  background: #fff;
  letter-spacing: 0.6px;
}
.filter svg { width: 28px; height: 28px; margin-right: 20.5px; color: #666; }
.filter-count {
  width: 36px;
  height: 36px;
  margin-left: 19.5px;
  border-radius: 50%;
  background: #f0f0f0;
  color: #666;
  font-size: 20px;
  font-weight: bold;
  line-height: 36px;
  letter-spacing: 0;
  text-align: center;
}

/* Table */
.table { margin-top: 106px; }
.row {
  position: relative;
  display: grid;
  grid-template-columns: 450px 768px 538px 624px;
  height: 434px;
  padding: 30px 0;
  border-bottom: 2px solid #eee;
}
.row > div { padding-left: 20px; }
.row.head {
  height: 44px;
  padding: 0;
  border-color: #333;
  font-weight: bold;
  line-height: 40px;
}
.number { display: block; font-size: 40px; letter-spacing: 0.5px; }
.created { margin-top: 5px; font-size: 22px; }
.details { display: flex; flex-direction: column; gap: 10px; }
.with-icon { display: flex; gap: 19px; }
.with-icon svg { width: 36px; height: 28px; margin-top: 8px; color: #999; }
.amount { line-height: 34px; }
.sum { display: block; font-size: 32px; line-height: 44px; }
.muted { margin-top: 18px; color: #777; font-size: 22px; }
.part { margin-top: 12px; font-size: 24px; font-weight: bold; }
.status { display: flex; justify-content: space-between; align-items: flex-start; }
.status > .dots { margin: 16px 43.5px 0 0; }
.pill {
  height: 36px;
  padding: 0 14px 0 15px;
  border-radius: 18px;
  background: #e0e0e0;
  color: #666;
  font-size: 18px;
  line-height: 36px;
  letter-spacing: 1px;
}

/* Action menu */
.menu {
  position: absolute;
  top: 101px;
  right: 20px;
  z-index: 2;
  width: 599px;
  height: 1100px;
  padding: 8px;
  border: 2px solid #eaeaea;
  border-radius: 20px;
  background: #fff;
  box-shadow: 0 16px 60px rgba(0, 0, 0, 0.07);
  font-size: 26px;
  letter-spacing: 0;
}
.menu-item {
  display: flex;
  align-items: center;
  gap: 20px;
  height: 64px;
  padding-left: 19px;
  border-radius: 20px;
  color: #000;
  white-space: nowrap;
}
.menu-item svg { width: 24px; height: 24px; }
.menu-item.hover { background: #efefef; }
.menu-item.danger { color: #ff1f00; }
.menu-item .flip { transform: scaleY(-1); }
.menu-label {
  height: 60px;
  padding-left: 19px;
  color: #777;
  font-size: 22px;
  line-height: 62px;
  letter-spacing: 0.6px;
}
.scrollbar {
  position: absolute;
  top: 14px;
  right: 13px;
  width: 14px;
  height: 967px;
  border-radius: 7px;
  background: rgba(0, 0, 0, 0.4);
}
```
